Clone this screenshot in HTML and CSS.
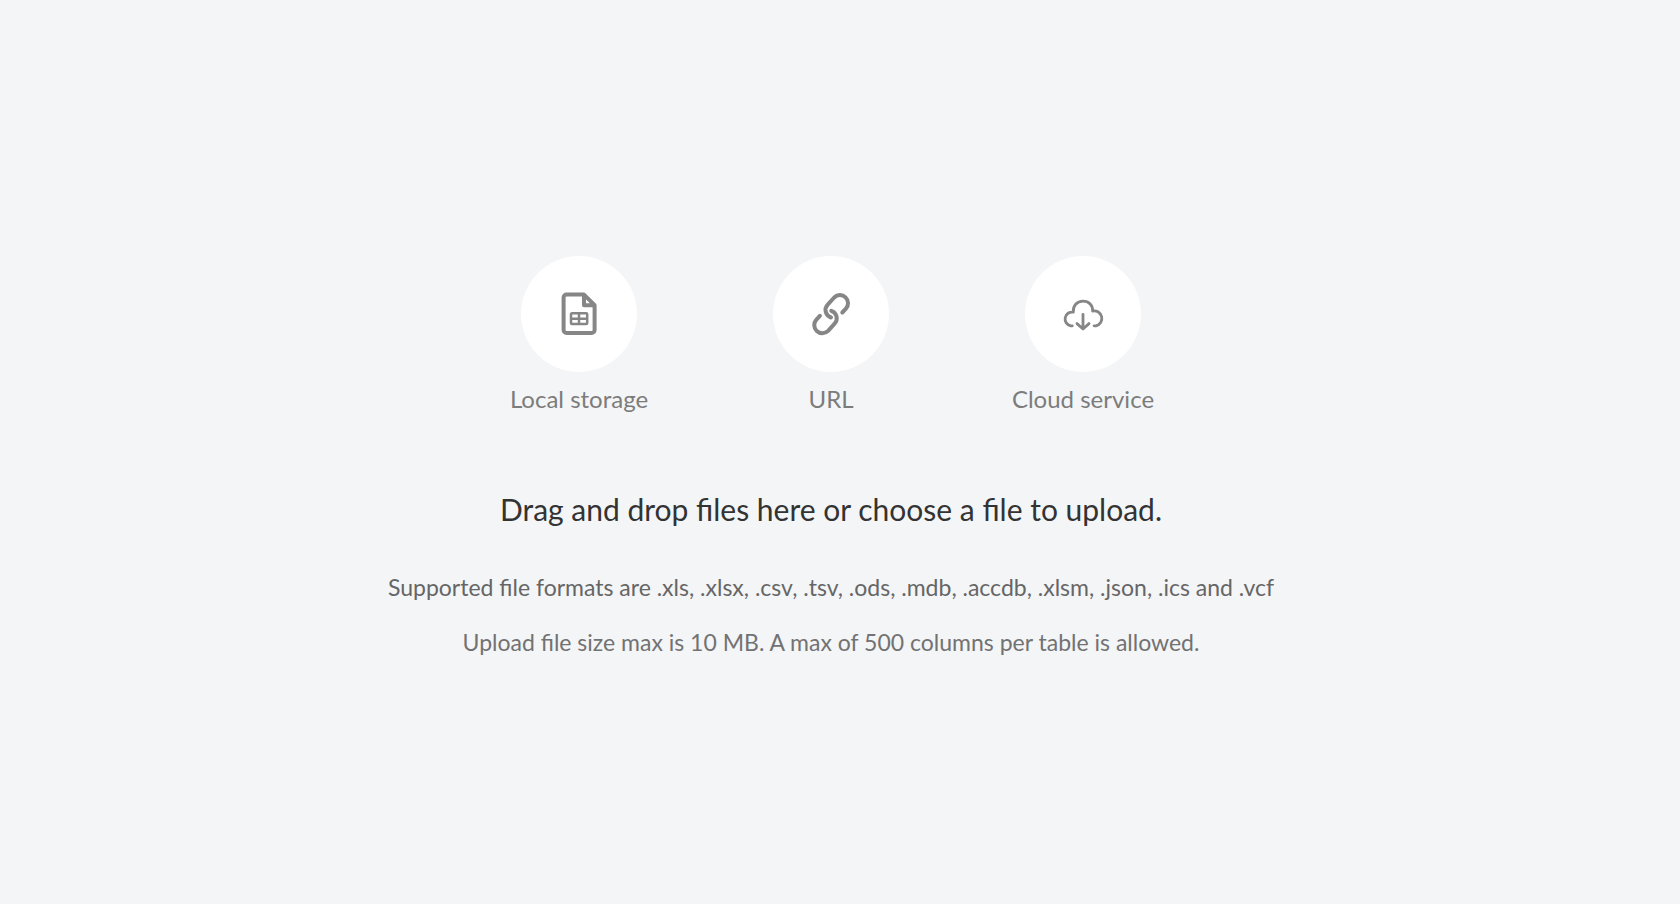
FILE: index.html
```html
<!DOCTYPE html>
<html lang="en">
<head>
<meta charset="utf-8">
<title>Upload a file</title>
<link rel="stylesheet" href="styles.css">
</head>
<body>
<main class="dropzone">
  <div class="sources">
    <button type="button" class="source">
      <span class="source-icon">
        <svg class="icon" viewBox="-30 -30 60 60" aria-hidden="true">
          <path stroke-width="4" d="M4.5 -19.4H-12.4A3 3 0 0 0 -15.4 -16.4V16A3 3 0 0 0 -12.4 19H12.6A3 3 0 0 0 15.6 16V-8.8L5 -19.4V-8.8H15.6"/>
          <path stroke-width="2.5" d="M-7 -.7H7.2A1 1 0 0 1 8.2 .3V9A1 1 0 0 1 7.2 10H-7A1 1 0 0 1 -8 9V.3A1 1 0 0 1 -7 -.7ZM0 -.7V10M-8 4.7H8.2"/>
        </svg>
      </span>
      <span class="source-label">Local storage</span>
    </button>
    <button type="button" class="source">
      <span class="source-icon">
        <svg class="icon" viewBox="-30 -30 60 60" aria-hidden="true">
          <path stroke-width="4" d="M11.3 -1.5L14.9 -5.3A8.1 8.1 0 0 0 3.2 -16.5L-3.3 -9.3A7.8 7.8 0 0 0 0 3.5"/>
          <path stroke-width="4" d="M-11.1 1.8L-14.6 5.6A8.1 8.1 0 0 0 -2.9 16.8L3.6 9.6A7.8 7.8 0 0 0 .3 -3.2"/>
        </svg>
      </span>
      <span class="source-label">URL</span>
    </button>
    <button type="button" class="source">
      <span class="source-icon">
        <svg class="icon" viewBox="-30 -30 60 60" aria-hidden="true">
          <path stroke-width="2.8" d="M-10.7 11.8H-12.3A6.8 6.8 0 0 1 -9.7 -1.8C-10.3 -8.2 -6 -12.8 0 -12.8S10 -8.6 9.6 -2.9A7.5 7.5 0 0 1 13 11.8H11.1"/>
          <path stroke-width="2.8" d="M0 .3V14.8M-6 9.6L0 15L6 9.6"/>
        </svg>
      </span>
      <span class="source-label">Cloud service</span>
    </button>
  </div>
  <h1 class="title">Drag and drop files here or choose a file to upload.</h1>
  <p class="formats">Supported file formats are .xls, .xlsx, .csv, .tsv, .ods, .mdb, .accdb, .xlsm, .json, .ics and .vcf</p>
  <p class="limits">Upload file size max is 10 MB. A max of 500 columns per table is allowed.</p>
</main>
</body>
</html>
```
FILE: styles.css
```css
* {
  box-sizing: border-box;
}

body {
  margin: 0;
  background: #f4f5f7;
  color: #666;
  font-family: Lato, "Liberation Sans", sans-serif;
  font-size: 23px;
  line-height: 32px;
}

.dropzone {
  display: flex;
  flex-direction: column;
  align-items: center;
  justify-content: center;
  min-height: 100vh;
  padding: 10px 18px 0 0;
  text-align: center;
}

.sources {
  display: grid;
  grid-template-columns: repeat(3, 252px);
}

.source {
  display: flex;
  flex-direction: column;
  align-items: center;
  gap: 11px;
  padding: 0;
  border: 0;
  background: none;
  color: #7c7c7c;
  font: inherit;
  font-size: 24px;
  cursor: pointer;
}

.source-icon {
  display: grid;
  place-items: center;
  width: 116px;
  height: 116px;
  border-radius: 50%;
  background: #fff;
}

.icon {
  width: 60px;
  height: 60px;
  fill: none;
  stroke: #868686;
  stroke-linecap: round;
  stroke-linejoin: round;
}

.title {
  margin: 74px 0 0;
  color: #333;
  font-size: 30px;
  font-weight: 400;
  line-height: 40px;
}

.formats {
  margin: 42px 0 0;
}

.limits {
  margin: 23px 0 0;
  color: #727272;
}
```
